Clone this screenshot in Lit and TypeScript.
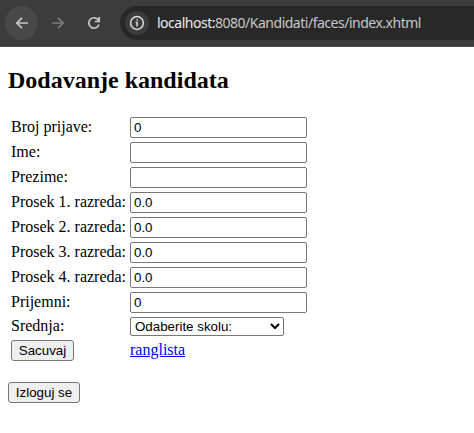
import { LitElement, html, css } from "lit";
import { customElement } from "lit/decorators.js";

const FIELDS: Array<[string, string]> = [
  ["Broj prijave:", "0"],
  ["Ime:", ""],
  ["Prezime:", ""],
  ["Prosek 1. razreda:", "0.0"],
  ["Prosek 2. razreda:", "0.0"],
  ["Prosek 3. razreda:", "0.0"],
  ["Prosek 4. razreda:", "0.0"],
  ["Prijemni:", "0"],
];

@customElement("browser-bar")
class BrowserBar extends LitElement {
  static styles = css`
    :host {
      display: flex;
      align-items: center;
      box-sizing: border-box;
      height: 47px;
      padding: 0 0 0 5px;
      background: #3c3c3c;
      border-bottom: 1px solid #4a4a4a;
      overflow: hidden;
    }
    .nav {
      display: flex;
      align-items: center;
      justify-content: center;
      flex: none;
      width: 33px;
      height: 34px;
      border-radius: 50%;
      margin-right: 3px;
      color: #c7c7c7;
    }
    .back {
      background: #484848;
    }
    .forward {
      color: #7b7b7b;
    }
    .reload {
      margin-right: 10px;
    }
    .address {
      display: flex;
      align-items: center;
      box-sizing: border-box;
      flex: 1;
      height: 34px;
      padding-left: 5px;
      border-radius: 17px 0 0 17px;
      background: #282828;
      color: #c7c7c7;
      font: 14px/20px "Noto Sans", "Open Sans", sans-serif;
      letter-spacing: -0.49px;
      white-space: nowrap;
    }
    .info {
      display: flex;
      align-items: center;
      justify-content: center;
      width: 24px;
      height: 24px;
      margin-right: 8px;
      border-radius: 50%;
      background: #3c3c3c;
      color: #dedede;
    }
    svg {
      display: block;
      fill: none;
      stroke: currentColor;
    }
    .url {
      display: block;
    }
    .host {
      color: #ececec;
    }
  `;

  render() {
    return html`
      <div class="nav back">
        <svg width="14" height="14" viewBox="0 0 14 14" stroke-width="1.7">
          <path d="M13 7H2M7 1.8L1.8 7L7 12.2" />
        </svg>
      </div>
      <div class="nav forward">
        <svg width="14" height="14" viewBox="0 0 14 14" stroke-width="1.7">
          <path d="M1 7H12M7 1.8L12.2 7L7 12.2" />
        </svg>
      </div>
      <div class="nav reload">
        <svg width="14" height="14" viewBox="0 0 14 14" stroke-width="1.7">
          <path d="M12 8.4A5.2 5.2 0 1 1 11.4 4.2L12.3 5.3M12.2 1V5.5H7.8" />
        </svg>
      </div>
      <div class="address">
        <span class="info">
          <svg width="16" height="16" viewBox="0 0 16 16" stroke-width="1.5">
            <circle cx="8" cy="8" r="6.4" />
            <path d="M6.8 7.6H8.1V11.6M8.1 4.3V5.8" />
          </svg>
        </span>
        <span class="url"><span class="host">localhost:</span>8080/Kandidati/faces/index.xhtml</span>
      </div>
    `;
  }
}

@customElement("app-root")
class AppRoot extends LitElement {
  static styles = css`
    :host {
      display: block;
      height: 433px;
      background: #fff;
      color: #000;
      font: 16px/18px "Liberation Serif", "Times New Roman", serif;
      overflow: hidden;
    }
    main {
      padding: 20px 8px 0;
    }
    h2 {
      margin: 0 0 23px;
      font-size: 24px;
      line-height: 27px;
    }
    .form {
      display: grid;
      grid-template-columns: 117px 177px;
      grid-auto-rows: 23px;
      gap: 2px;
      padding-left: 3px;
    }
    .form label {
      padding-top: 1px;
      white-space: nowrap;
    }
    .form .school {
      padding-top: 0;
    }
    input,
    select,
    button {
      display: block;
      box-sizing: border-box;
      margin: 0;
      font: 13.333px "Liberation Sans", Arial, sans-serif;
      color: #000;
      border: 1px solid #767676;
    }
    input {
      width: 177px;
      height: 21px;
      padding: 1px 3px;
      border-radius: 2px;
      background: #fff;
    }
    select {
      width: 154px;
      height: 19px;
      background-color: #fff;
      border-radius: 2px;
    }
    button {
      height: 21px;
      padding: 0;
      border-radius: 3px;
      background: #efefef;
    }
    .save {
      width: 63px;
      margin-top: -2px;
    }
    .link {
      margin-top: -1px;
    }
    .logout {
      width: 72px;
      margin-top: 17px;
    }
    a {
      color: #0000ee;
    }
  `;

  render() {
    return html`
      <browser-bar></browser-bar>
      <main>
        <h2>Dodavanje kandidata</h2>
        <div class="form">
          ${FIELDS.map(
            ([label, value], i) => html`
              <label for="f${i}">${label}</label>
              <input id="f${i}" type="text" .value=${value} />
            `
          )}
          <label class="school" for="school">Srednja:</label>
          <select id="school">
            <option>Odaberite skolu:</option>
          </select>
          <button class="save">Sacuvaj</button>
          <span class="link"><a href="#">ranglista</a></span>
        </div>
        <button class="logout">Izloguj se</button>
      </main>
    `;
  }
}
